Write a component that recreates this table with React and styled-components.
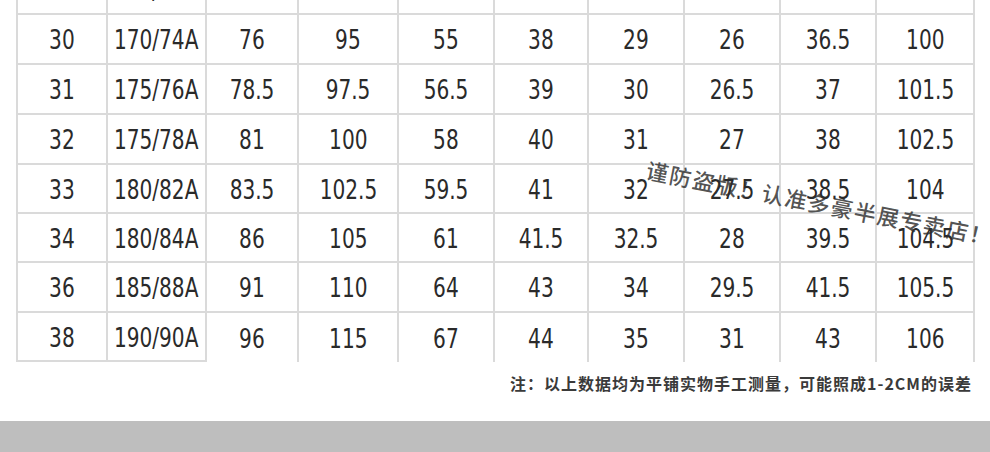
import styled, { createGlobalStyle } from "styled-components";

const GlobalStyle = createGlobalStyle`
  html, body {
    margin: 0;
    padding: 0;
    background: #ffffff;
  }
  body {
    font-family: "Liberation Sans Narrow", "DejaVu Sans Condensed", "Liberation Sans", sans-serif;
  }
`;

const Page = styled.div`
  position: relative;
  width: 990px;
  height: 452px;
  overflow: hidden;
  background: #ffffff;
  display: flex;
  flex-direction: column;
`;

const Table = styled.div`
  margin: -35px 0 0 16px;
  display: grid;
  grid-template-columns: 90px 99px 92px 100px 96px 94px 96px 96px 96px 98px;
  grid-template-rows: 50px 50px 50px 50px 49px 49px 50px 49px;
  border-left: 2px solid #dadada;
  width: 957px;
  box-sizing: border-box;
`;

const Cell = styled.div`
  box-sizing: border-box;
  display: flex;
  align-items: center;
  justify-content: center;
  border-right: 2px solid #dadada;
  border-bottom: ${(p) => (p.$last && !p.$edge ? "none" : "2px solid #dadada")};
  color: #2a2a2a;
  font-size: 26px;
  padding-top: 2px;
`;

const Value = styled.span`
  display: inline-block;
  transform: scaleX(0.86);
  white-space: nowrap;
`;

const Note = styled.div`
  margin: 9px 18px 0 0;
  align-self: flex-end;
  font-family: "Noto Sans CJK SC", "Noto Sans", sans-serif;
  font-weight: 700;
  font-size: 16px;
  letter-spacing: 1px;
  color: #3a3a3a;
`;

const Spacer = styled.div`
  flex: 1;
`;

const Band = styled.div`
  height: 31px;
  background: #bebebe;
`;

const Watermark = styled.div`
  position: absolute;
  left: 650px;
  top: 153px;
  transform: rotate(11deg);
  transform-origin: left top;
  white-space: nowrap;
  font-family: "Noto Sans CJK SC", sans-serif;
  font-size: 22px;
  font-weight: 500;
  letter-spacing: 1.5px;
  color: rgba(45, 45, 45, 0.82);
`;

const rows = [
  ["29", "170/72A", "73.5", "92.5", "53.5", "37", "28", "25.5", "35", "98.5"],
  ["30", "170/74A", "76", "95", "55", "38", "29", "26", "36.5", "100"],
  ["31", "175/76A", "78.5", "97.5", "56.5", "39", "30", "26.5", "37", "101.5"],
  ["32", "175/78A", "81", "100", "58", "40", "31", "27", "38", "102.5"],
  ["33", "180/82A", "83.5", "102.5", "59.5", "41", "32", "27.5", "38.5", "104"],
  ["34", "180/84A", "86", "105", "61", "41.5", "32.5", "28", "39.5", "104.5"],
  ["36", "185/88A", "91", "110", "64", "43", "34", "29.5", "41.5", "105.5"],
  ["38", "190/90A", "96", "115", "67", "44", "35", "31", "43", "106"],
];

export default function App() {
  return (
    <>
      <GlobalStyle />
      <Page>
        <Table>
          {rows.map((row, r) =>
            row.map((v, c) => (
              <Cell
                key={`${r}-${c}`}
                $last={r === rows.length - 1}
                $edge={c < 2}
              >
                <Value>{v}</Value>
              </Cell>
            ))
          )}
        </Table>
        <Note>注：以上数据均为平铺实物手工测量，可能照成1-2CM的误差</Note>
        <Spacer />
        <Band />
        <Watermark>谨防盗版！认准多豪半展专卖店！</Watermark>
      </Page>
    </>
  );
}
